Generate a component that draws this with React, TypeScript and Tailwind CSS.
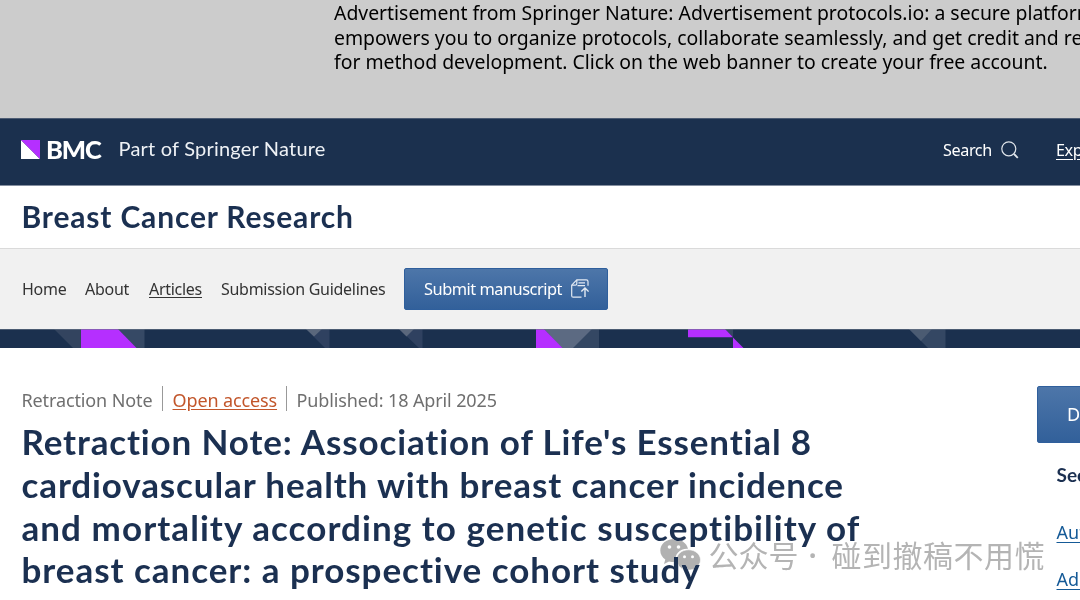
import React from 'react';

interface NavItem {
  label: string;
  active?: boolean;
  className: string;
}

const AD_LINES = [
  'Advertisement from Springer Nature: Advertisement protocols.io: a secure platform that',
  'empowers you to organize protocols, collaborate seamlessly, and get credit and recognition',
  'for method development. Click on the web banner to create your free account.',
];

const NAV_ITEMS: NavItem[] = [
  { label: 'Home', className: 'w-[63px]' },
  { label: 'About', className: 'w-[64px]' },
  { label: 'Articles', active: true, className: 'w-[72px]' },
  { label: 'Submission Guidelines', className: 'w-[183px]' },
];

const TITLE_LINES = [
  { text: "Retraction Note: Association of Life's Essential 8", className: 'tracking-[0.86px]' },
  { text: 'cardiovascular health with breast cancer incidence', className: 'tracking-[0.88px]' },
  { text: 'and mortality according to genetic susceptibility of', className: 'tracking-[1.06px]' },
  { text: 'breast cancer: a prospective cohort study', className: 'tracking-[0.95px]' },
];

const SearchIcon = () => (
  <svg className="shrink-0 w-[18px] h-[18px]" viewBox="0 0 18 18" fill="none" stroke="#dfe4ea" strokeWidth="1.2">
    <circle cx="7.8" cy="7.8" r="7" />
    <path d="M13 13L16.8 16.8" strokeWidth="1.8" />
  </svg>
);

const SubmitIcon = () => (
  <svg className="shrink-0 w-[18px] h-[19px] -mt-0.5" viewBox="0 0 18 19" fill="none" stroke="#e3eaf3" strokeWidth="1.2">
    <path d="M10.5 18.2H2.2Q0.7 18.2 0.7 16.7V6.2L5.8 0.8H15.3Q17 0.8 17 2.5V6.8" />
    <path d="M0.9 6.2H4.3Q5.8 6.2 5.8 4.7V1M7.5 3.8H14M6.5 6.6H14" />
    <path d="M14 18V9.2M10.3 12.6L14 8.9L17.6 12.6" strokeWidth="1.4" />
  </svg>
);

const PatternStrip = () => (
  <svg className="block w-full h-[19px] bg-[#1b304e]" viewBox="0 0 1080 19">
    <path d="M54 0H81V19H73Z" fill="#33445f" />
    <path d="M118 0H144.500V19H136Z" fill="#364965" />
    <path d="M81 0H118L136.500 19H81Z" fill="#b52fff" />
    <path d="M306 0H329.500V19H325Z" fill="#2f4160" />
    <path d="M306 0H322L314 7.500Z" fill="#5a677c" />
    <path d="M399 0H422.500V19H419Z" fill="#2f4160" />
    <path d="M399 0H414L406.500 7.500Z" fill="#5a677c" />
    <path d="M544 0H599V19H562Z" fill="#344763" />
    <path d="M544 0H592L573 19H562Z" fill="#5c6a82" />
    <path d="M536 0H544L562.500 19H536Z" fill="#b52fff" />
    <path d="M725 0H733V8Z" fill="#344763" />
    <path d="M688 0H725L733 8.200H688Z" fill="#b52fff" />
    <path d="M733 8.500L743.500 19H733Z" fill="#b52fff" />
    <path d="M909 0H945.500V19H928Z" fill="#344763" />
    <path d="M909 0H932L921 12Z" fill="#4b5b72" />
    <path d="M0 0.500H1080" stroke="#6c788a" strokeOpacity="0.6" />
  </svg>
);

const WeChatIcon = () => (
  <svg className="shrink-0 w-[41px] h-[34px]" viewBox="0 0 41 34">
    <path fill="#b1b1b1" d="M14 1C6.300 1 0.300 6 0.300 12.500C0.300 16.200 2.200 19.300 5.300 21.400L4 26L9 23.400C10.700 23.900 12.300 24 14 24C14.800 24 15.500 24 16 23.900C13.800 16.500 20 10.300 28 10.800C26.800 5 21 1 14 1Z" />
    <path fill="#b1b1b1" stroke="#fff" strokeWidth="0.6" d="M28.500 11.800C21.700 11.800 16.500 16.300 16.500 21.900C16.500 27.700 21.700 32 28.500 32C30 32 31.500 31.800 32.800 31.400L36.800 33.500L35.800 29.800C38.700 27.800 40.500 25 40.500 21.900C40.500 16.300 35.200 11.800 28.500 11.800Z" />
    <g fill="#fff">
      <circle cx="9.500" cy="9" r="1.8" />
      <circle cx="18.500" cy="9" r="1.800" />
      <circle cx="24.500" cy="18.800" r="1.500" />
      <circle cx="32.500" cy="18.800" r="1.500" />
    </g>
  </svg>
);

const App: React.FC = () => {
  return (
    <div className="relative w-[1080px] h-[600px] overflow-hidden bg-white font-['Noto_Sans','Open_Sans',sans-serif] whitespace-nowrap">
      <div className="h-[118px] bg-[#cccccc] pl-[334px] pt-px text-[19.4px] leading-[24.5px] text-black">
        {AD_LINES.map((line) => (
          <div key={line}>{line}</div>
        ))}
      </div>

      <header className="h-[68px] bg-[#1b304e] border-t border-b border-t-[#4d5c73] border-b-[#858fa0] flex items-center text-white">
        <svg className="ml-[21px] mt-[-6px] w-[19px] h-[19px]" viewBox="0 0 19 19">
          <path d="M0 0V19H19Z" fill="#fff" />
          <path d="M0 0H19V19Z" fill="#b52fff" />
        </svg>
        <span className="ml-[6px] mt-[-7px] w-[55px] font-['Lato',sans-serif] font-black text-[25.5px] leading-8 tracking-[-1.1px]">BMC</span>
        <span className="ml-[17.5px] mt-[-9px] font-['Lato',sans-serif] text-[20px] leading-8 tracking-[0.2px] text-[#eef1f5]">Part of Springer Nature</span>
        <div className="ml-auto w-[137px] flex items-center -mt-1 text-[16.2px]">
          <span className="shrink-0 w-[58px] tracking-[-0.4px]">Search</span>
          <SearchIcon />
          <a className="shrink-0 ml-[37px] underline underline-offset-3 tracking-[-0.4px]">Explore journals</a>
        </div>
      </header>

      <div className="h-[62px] flex items-center pl-[21.5px] pb-[2px] bg-white">
        <h2 className="font-['Lato',sans-serif] font-bold text-[30px] leading-10 tracking-[0.83px] text-[#1b3051]">Breast Cancer Research</h2>
      </div>

      <nav className="h-[81px] bg-[#f1f1f1] border-t border-[#dadada] flex items-center pl-[22px] text-[16px] tracking-[-0.28px] text-[#333]">
        {NAV_ITEMS.map((item) => (
          <a key={item.label} className={item.className}>
            <span className={item.active ? 'underline underline-offset-2' : ''}>{item.label}</span>
          </a>
        ))}
        <button className="w-[204px] h-[42px] flex items-center pl-[19px] rounded-[2px] border border-[#2f5f9c] bg-linear-to-b from-[#4d76a9] to-[#32609a] text-white text-[16.4px] tracking-[-0.5px]">
          <span className="w-[147px] text-left">Submit manuscript</span>
          <SubmitIcon />
        </button>
      </nav>
      <PatternStrip />

      <main className="flex">
        <article className="w-[1037px] pl-[21.5px]">
          <div className="mt-[38px] h-[25px] flex text-[18px] leading-[28px] tracking-[-0.12px] text-[#6f6f6f]">
            <span className="w-[141.5px] border-r border-[#999]">Retraction Note</span>
            <span className="w-[124px] pl-[9.5px] border-r border-[#999]">
              <a className="text-[#c2562b] underline underline-offset-2">Open access</a>
            </span>
            <span className="pl-[9.5px]">Published: 18 April 2025</span>
          </div>
          <h1 className="mt-[9px] font-['Lato',sans-serif] font-bold text-[35px] leading-[42.8px] text-[#1b3051]">
            {TITLE_LINES.map((line) => (
              <div key={line.text} className={line.className}>{line.text}</div>
            ))}
          </h1>
        </article>

        <aside className="w-[43px] overflow-hidden">
          <button className="mt-[38px] w-[300px] h-[57px] block pl-[29px] text-left rounded-[2px] border border-[#2f5f9c] bg-linear-to-b from-[#4d76a9] to-[#32609a] text-white text-[18px]">
            Download PDF
          </button>
          <div className="pl-[19.5px]">
            <h3 className="mt-[18px] font-['Lato',sans-serif] font-bold text-[19px] leading-7 text-[#1b3051]">Sections</h3>
            <a className="block mt-[31px] text-[18px] leading-[24px] text-[#155a97] underline underline-offset-3">Author information</a>
            <a className="block mt-[23px] text-[18px] leading-[24px] text-[#155a97] underline underline-offset-3">Additional information</a>
          </div>
        </aside>
      </main>

      {/* Account watermark, the article title stays dark where they cross */}
      <div className="absolute left-[659.5px] top-[535px] h-[40px] flex items-center mix-blend-darken font-['Noto_Sans_CJK_SC',sans-serif] text-[30px] leading-10 text-[#b4b4b4]">
        <WeChatIcon />
        <span className="ml-[8px] -mt-0.5 w-[90px]">公众号</span>
        <span className="mt-0.5 w-[33px] font-['Noto_Sans',sans-serif] font-semibold pl-[10px]">·</span>
        <span className="-mt-0.5 tracking-[0.5px]">碰到撤稿不用慌</span>
      </div>
    </div>
  );
};

export default App;
